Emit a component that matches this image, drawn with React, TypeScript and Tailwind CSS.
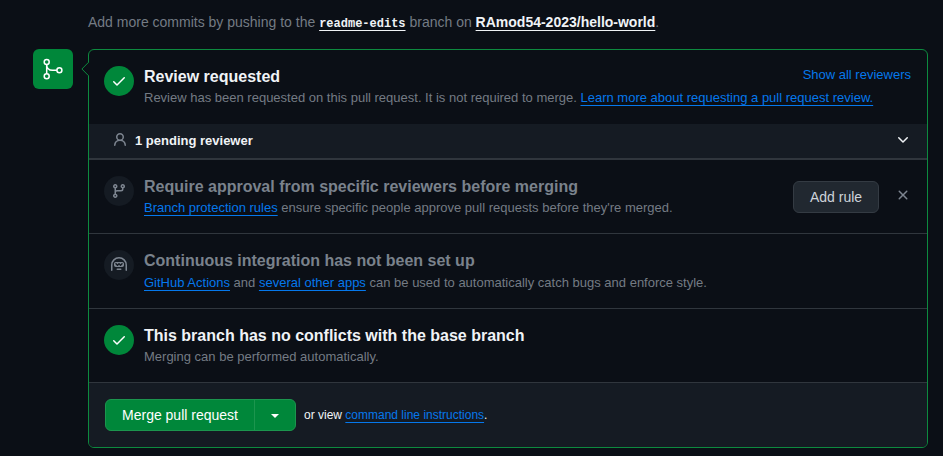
import type { ReactNode } from "react";

const paths = {
  check:
    "M13.78 4.22a.75.75 0 0 1 0 1.06l-7.25 7.25a.75.75 0 0 1-1.06 0L2.22 9.28a.751.751 0 0 1 .018-1.042.751.751 0 0 1 1.042-.018L6 10.94l6.72-6.72a.75.75 0 0 1 1.06 0Z",
  person:
    "M10.561 8.073a6 6 0 0 1 3.432 5.142.75.75 0 1 1-1.498.07 4.5 4.5 0 0 0-8.99 0 .75.75 0 0 1-1.498-.07 6 6 0 0 1 3.431-5.142 3.999 3.999 0 1 1 5.123 0ZM10.5 5a2.5 2.5 0 1 0-5 0 2.5 2.5 0 0 0 5 0Z",
  branch:
    "M9.5 3.25a2.25 2.25 0 1 1 3 2.122V6A2.5 2.5 0 0 1 10 8.5H6a1 1 0 0 0-1 1v1.128a2.251 2.251 0 1 1-1.5 0V5.372a2.25 2.25 0 1 1 1.5 0v1.836A2.493 2.493 0 0 1 6 7h4a1 1 0 0 0 1-1v-.628A2.25 2.25 0 0 1 9.5 3.25Zm-6 0a.75.75 0 1 0 1.5 0 .75.75 0 0 0-1.5 0Zm8.25-.75a.75.75 0 1 0 0 1.5.75.75 0 0 0 0-1.5ZM4.25 12a.75.75 0 1 0 0 1.5.75.75 0 0 0 0-1.5Z",
  chevron:
    "M12.78 5.22a.749.749 0 0 1 0 1.06l-4.25 4.25a.749.749 0 0 1-1.06 0L3.22 6.28a.749.749 0 1 1 1.06-1.06L8 8.939l3.72-3.719a.749.749 0 0 1 1.06 0Z",
  close:
    "M3.72 3.72a.75.75 0 0 1 1.06 0L8 6.94l3.22-3.22a.749.749 0 0 1 1.275.326.749.749 0 0 1-.215.734L9.06 8l3.22 3.22a.749.749 0 0 1-.326 1.275.749.749 0 0 1-.734-.215L8 9.06l-3.22 3.22a.751.751 0 0 1-1.042-.018.751.751 0 0 1-.018-1.042L6.94 8 3.72 4.78a.75.75 0 0 1 0-1.06Z",
  hubot:
    "M0 8a8 8 0 1 1 16 0v5.25a.75.75 0 0 1-1.5 0V8a6.5 6.5 0 1 0-13 0v5.25a.75.75 0 0 1-1.5 0Zm5.5 4.25a.75.75 0 0 1 .75-.75h3.5a.75.75 0 0 1 0 1.5h-3.5a.75.75 0 0 1-.75-.75ZM3 6.75C3 5.784 3.784 5 4.75 5h6.5c.966 0 1.75.784 1.75 1.75v1.5A1.75 1.75 0 0 1 11.25 10h-6.5A1.75 1.75 0 0 1 3 8.25Zm1.47-.53a.75.75 0 0 1 1.06 0l.97.97.97-.97a.75.75 0 0 1 1.06 0l.97.97.97-.97a.75.75 0 1 1 1.06 1.06l-1.5 1.5a.75.75 0 0 1-1.06 0L8 7.81l-.97.97a.75.75 0 0 1-1.06 0l-1.5-1.5a.75.75 0 0 1 0-1.06Z",
};

function Icon({ name }: { name: keyof typeof paths }) {
  return (
    <svg width="16" height="16" viewBox="0 0 16 16" fill="currentColor" fillRule="evenodd" className="block shrink-0">
      <path d={paths[name]} />
    </svg>
  );
}

function MergeIcon() {
  return (
    <svg width="24" height="24" viewBox="0 0 24 24" fill="none" stroke="currentColor" strokeWidth="1.5">
      <circle cx="5.7" cy="4.9" r="2.5" />
      <circle cx="5.7" cy="19.3" r="2.5" />
      <circle cx="18.4" cy="13.2" r="2.5" />
      <path d="M5.7 7.4v9.4M5.7 7.4c0 3.5 2 5.8 5.8 5.8h4.4" />
    </svg>
  );
}

function Link({ children }: { children: ReactNode }) {
  return (
    <a href="#" className="text-[#0578ec] underline underline-offset-[3px] decoration-1">
      {children}
    </a>
  );
}

type RowProps = {
  icon: keyof typeof paths;
  active?: boolean;
  title: string;
  action?: ReactNode;
  className: string;
  children: ReactNode;
};

function StatusRow({ icon, active, title, action, className, children }: RowProps) {
  return (
    <div className={`flex px-[15px] pt-4 ${className}`}>
      <div
        className={`mr-[10px] flex size-[30px] shrink-0 items-center justify-center rounded-full ${
          active ? "bg-[#00873a] text-white" : "bg-[#151b23] text-[#7d8590]"
        }`}
      >
        <Icon name={icon} />
      </div>
      <div className="min-w-0 flex-1 whitespace-nowrap">
        <h3 className={`text-base leading-[22px] font-bold ${active ? "text-[#f0f3f6]" : "text-[#7a828c]"}`}>{title}</h3>
        <p className={`text-[13px] leading-5 text-[#747b84] ${icon === "hubot" ? "pt-px" : ""}`}>{children}</p>
      </div>
      {action}
    </div>
  );
}

export default function App() {
  return (
    <main className="h-[456px] w-[943px] overflow-hidden bg-[#0b0f16] font-['Liberation_Sans',Arial,sans-serif]">
      <p className="flex h-[49px] items-start pt-[11px] pl-[88px] text-sm leading-[22px] whitespace-pre text-[#747b84]">
        <span>
          Add more commits by pushing to the{" "}
          <a href="#" className="font-['Liberation_Mono',monospace] text-xs font-bold text-[#f0f3f6] underline underline-offset-[3px] decoration-1">
            readme-edits
          </a>{" "}
          branch on{" "}
          <a href="#" className="font-bold text-[#f0f3f6] underline underline-offset-[3px] decoration-1">
            RAmod54-2023/hello-world
          </a>
          .
        </span>
      </p>
      <div className="flex pl-[33px]">
        <div className="flex size-10 shrink-0 items-center justify-center rounded-md bg-[#00873a] text-white">
          <MergeIcon />
        </div>
        <section className="relative ml-[15px] h-[399px] w-[840px] rounded-md border border-[#0d8a3f]">
          <svg className="absolute top-[11px] -left-[8px]" width="8" height="16" viewBox="0 0 8 16" fill="none">
            <path d="M8 1v14L1 8Z" fill="#0b0f16" />
            <path d="M7.5 1.3 .9 8l6.6 6.7" stroke="#0d8a3f" />
          </svg>
          <StatusRow
            icon="check"
            active
            title="Review requested"
            className="h-[74px]"
            action={
              <a href="#" className="mr-px text-[13px] leading-[18px] text-[#0578ec]">
                Show all reviewers
              </a>
            }
          >
            Review has been requested on this pull request. It is not required to merge.{" "}
            <Link>Learn more about requesting a pull request review.</Link>
          </StatusRow>
          <div className="flex h-9 items-center border-b-2 border-[#30363d] bg-[#151b23] pr-4 pl-[23px] pb-px">
            <span className="mb-px text-[#7d8590]">
              <Icon name="person" />
            </span>
            <span className="ml-[7px] flex-1 text-[13px] leading-5 font-bold text-[#f0f3f6]">1 pending reviewer</span>
            <span className="mb-px text-[#f0f3f6]">
              <Icon name="chevron" />
            </span>
          </div>
          <StatusRow
            icon="branch"
            title="Require approval from specific reviewers before merging"
            className="h-[74px] border-b border-[#30363d]"
            action={
              <div className="mt-[5px] flex h-8 items-center">
                <button className="h-8 w-[86px] rounded-md border border-[#343b43] bg-[#212830] text-sm text-[#cdd3da]">
                  Add rule
                </button>
                <span className="mr-px mb-1 ml-4 text-[#7d8590]">
                  <Icon name="close" />
                </span>
              </div>
            }
          >
            <Link>Branch protection rules</Link> ensure specific people approve pull requests before they're merged.
          </StatusRow>
          <StatusRow icon="hubot" title="Continuous integration has not been set up" className="h-[75px] border-b border-[#30363d]">
            <Link>GitHub Actions</Link> and <Link>several other apps</Link> can be used to automatically catch bugs and enforce
            style.
          </StatusRow>
          <StatusRow
            icon="check"
            active
            title="This branch has no conflicts with the base branch"
            className="h-[74px] border-b border-[#30363d]"
          >
            Merging can be performed automatically.
          </StatusRow>
          <div className="flex h-16 items-center rounded-b-[5px] bg-[#151b23] pl-4">
            <div className="flex h-8 overflow-hidden rounded-md border border-[#1c954e] bg-[#00873a] text-white">
              <button className="w-[149px] border-r border-[#1c954e] text-sm">Merge pull request</button>
              <button className="flex w-10 items-center justify-center" aria-label="Select merge method">
                <svg width="8" height="4" viewBox="0 0 8 4" fill="currentColor" className="mt-px">
                  <path d="M0 0h8L4 4Z" />
                </svg>
              </button>
            </div>
            <p className="ml-2 text-xs text-[#f0f3f6]">
              or view <Link>command line instructions</Link>.
            </p>
          </div>
        </section>
      </div>
    </main>
  );
}
